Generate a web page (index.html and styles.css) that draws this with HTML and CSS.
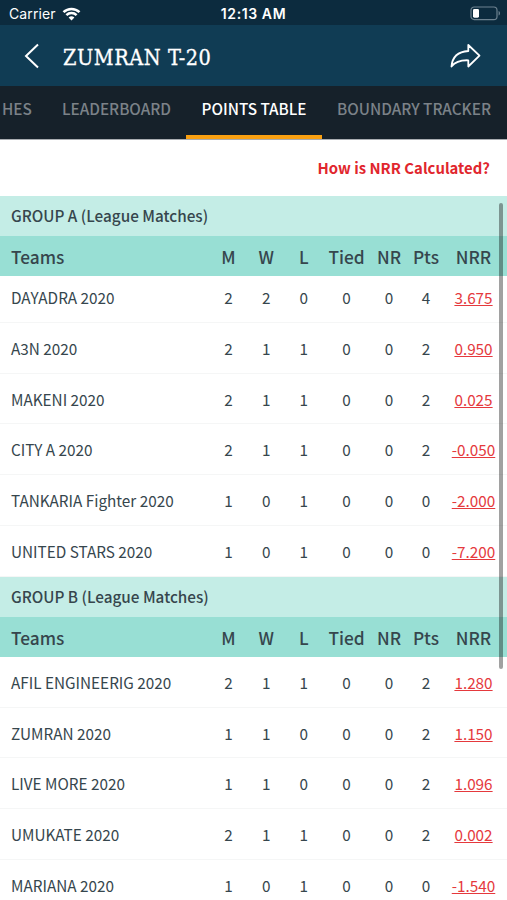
FILE: index.html
```html
<!DOCTYPE html>
<html lang="en">
<head>
    <meta charset="UTF-8">
    <meta name="viewport" content="width=device-width, initial-scale=1.0">
    <title>ZUMRAN T-20</title>
    <link rel="stylesheet" href="styles.css">
</head>
<body>
    <div class="status-bar">
        <div class="carrier">
            <span>Carrier</span>
            <svg class="wifi" width="19" height="14" viewBox="0 0 18 14" fill="none" stroke="#fff" stroke-width="2.5">
                <path d="M1 5.2a11.4 11.4 0 0 1 16 0"/>
                <path d="M3.9 8.2a7.2 7.2 0 0 1 10.2 0"/>
                <path d="M9 13.6l-2.9-3a4.1 4.1 0 0 1 5.8 0z" fill="#fff" stroke="none"/>
            </svg>
        </div>
        <span class="time">12:13 AM</span>
        <svg class="battery" width="31" height="15" viewBox="0 0 31 15">
            <rect x="1" y="1" width="26" height="12.6" rx="3.2" fill="none" stroke="#6d8290" stroke-width="1.2"/>
            <rect x="3" y="2.9" width="6" height="8.8" rx="1.4" fill="#fff"/>
            <path d="M28.6 5v4.6c1.9-.7 1.9-3.9 0-4.6z" fill="#6d8290"/>
        </svg>
    </div>
    <header class="header">
        <svg class="back" width="16" height="26" viewBox="0 0 16 26" fill="none" stroke="#fff" stroke-width="2">
            <path d="M14 1.5L2 13l12 11.500"/>
        </svg>
        <h1>ZUMRAN T-20</h1>
        <svg class="share" width="32" height="26" viewBox="0 0 32 26" fill="none" stroke="#fff" stroke-width="1.8" stroke-linejoin="round">
            <path d="M18.300 2L29.500 12.700 18.300 23.500V17.300C10.500 17 5 19 1.500 23.500 2.300 14 8.500 8.600 18.300 8z"/>
        </svg>
    </header>
    <nav class="tabs">
        <a class="tab tab-matches">HES</a>
        <a class="tab tab-leaderboard">LEADERBOARD</a>
        <a class="tab tab-points active">POINTS TABLE</a>
        <a class="tab tab-boundary">BOUNDARY TRACKER</a>
    </nav>
    <div class="nrr-link"><a>How is NRR Calculated?</a></div>
    <main class="tables">
        <section class="group group-a">
            <h2>GROUP A (League Matches)</h2>
            <div class="row head"><span>Teams</span><span>M</span><span>W</span><span>L</span><span>Tied</span><span>NR</span><span>Pts</span><span>NRR</span></div>
            <div class="row"><span>DAYADRA 2020</span><span>2</span><span>2</span><span>0</span><span>0</span><span>0</span><span>4</span><a>3.675</a></div>
            <div class="row"><span>A3N 2020</span><span>2</span><span>1</span><span>1</span><span>0</span><span>0</span><span>2</span><a>0.950</a></div>
            <div class="row"><span>MAKENI 2020</span><span>2</span><span>1</span><span>1</span><span>0</span><span>0</span><span>2</span><a>0.025</a></div>
            <div class="row"><span>CITY A 2020</span><span>2</span><span>1</span><span>1</span><span>0</span><span>0</span><span>2</span><a>-0.050</a></div>
            <div class="row"><span>TANKARIA Fighter 2020</span><span>1</span><span>0</span><span>1</span><span>0</span><span>0</span><span>0</span><a>-2.000</a></div>
            <div class="row"><span>UNITED STARS 2020</span><span>1</span><span>0</span><span>1</span><span>0</span><span>0</span><span>0</span><a>-7.200</a></div>
        </section>
        <section class="group">
            <h2>GROUP B (League Matches)</h2>
            <div class="row head"><span>Teams</span><span>M</span><span>W</span><span>L</span><span>Tied</span><span>NR</span><span>Pts</span><span>NRR</span></div>
            <div class="row"><span>AFIL ENGINEERIG 2020</span><span>2</span><span>1</span><span>1</span><span>0</span><span>0</span><span>2</span><a>1.280</a></div>
            <div class="row"><span>ZUMRAN 2020</span><span>1</span><span>1</span><span>0</span><span>0</span><span>0</span><span>2</span><a>1.150</a></div>
            <div class="row"><span>LIVE MORE 2020</span><span>1</span><span>1</span><span>0</span><span>0</span><span>0</span><span>2</span><a>1.096</a></div>
            <div class="row"><span>UMUKATE 2020</span><span>2</span><span>1</span><span>1</span><span>0</span><span>0</span><span>2</span><a>0.002</a></div>
            <div class="row"><span>MARIANA 2020</span><span>1</span><span>0</span><span>1</span><span>0</span><span>0</span><span>0</span><a>-1.540</a></div>
        </section>
        <div class="scrollbar"></div>
    </main>
</body>
</html>
```
FILE: styles.css
```css
* {
    box-sizing: border-box;
}
body {
    margin: 0;
    height: 900px;
    overflow: hidden;
    display: flex;
    flex-direction: column;
    background: #fff;
    color: #36464d;
    font-family: "Noto Sans CJK SC", "Open Sans", sans-serif;
}
.status-bar {
    flex: none;
    height: 25px;
    padding: 2px 6px 0 9px;
    display: grid;
    grid-template-columns: 1fr auto 1fr;
    align-items: center;
    background: #0c2b3e;
    color: #fff;
    font-family: Inter, sans-serif;
    font-size: 14px;
}
.carrier {
    display: flex;
    align-items: center;
    gap: 6px;
    letter-spacing: 0.1px;
}
.time {
    font-weight: 600;
    letter-spacing: 0.6px;
    margin-right: 3px;
}
.battery {
    justify-self: end;
}
.header {
    flex: none;
    height: 61px;
    padding: 0 25px 0 24px;
    display: flex;
    align-items: center;
    background: #103c54;
}
.header h1 {
    margin: 4px auto 0 23px;
    color: #fff;
    font-family: "DejaVu Serif Condensed", "DejaVu Serif", serif;
    font-size: 21.5px;
    font-weight: normal;
    letter-spacing: 0.55px;
    -webkit-text-stroke: 0.3px #fff;
    white-space: nowrap;
}
.tabs {
    flex: none;
    height: 54px;
    display: flex;
    background: #16212a;
    border-bottom: 1px solid #a9adb1;
    overflow: hidden;
}
.tab {
    flex: none;
    height: 54px;
    line-height: 44px;
    text-align: center;
    font-size: 15.3px;
    font-weight: 500;
    color: #7b8288;
    white-space: nowrap;
}
.tab-matches {
    width: 47px;
    padding-left: 2px;
    text-align: left;
}
.tab-leaderboard {
    width: 139px;
}
.tab-points {
    width: 136px;
}
.tab-boundary {
    width: 184px;
}
.tab.active {
    color: #fff;
    border-bottom: 5px solid #f9a010;
}
.nrr-link {
    flex: none;
    height: 56px;
    padding-right: 17px;
    line-height: 56px;
    text-align: right;
    color: #e1262d;
    font-size: 14.9px;
    font-weight: 700;
}
.tables {
    position: relative;
}
.group h2 {
    margin: 0;
    height: 40px;
    padding-left: 11px;
    line-height: 39px;
    background: #c4ede6;
    font-size: 15.3px;
    font-weight: 500;
}
.row {
    height: 50.8px;
    display: grid;
    grid-template-columns: 209.5px 38px 37.5px 37.5px 48px 37px 37px 58px;
    border-bottom: 1px solid #f5f6f6;
    line-height: 50px;
    font-size: 15.3px;
    text-align: center;
    white-space: nowrap;
}
.row span:first-child {
    padding-left: 11px;
    text-align: left;
}
.row a {
    color: #e5393d;
    text-decoration: underline;
}
.row.head {
    position: relative;
    z-index: 1;
    height: 40px;
    border: none;
    background: #98dfd4;
    line-height: 42px;
    font-size: 17.3px;
    font-weight: 500;
}
/* first row is scrolled slightly under the header */
.group-a .head + .row {
    margin-top: -4px;
}
.scrollbar {
    position: absolute;
    z-index: 2;
    top: 7px;
    right: 4px;
    width: 4px;
    height: 466px;
    border-radius: 2px;
    background: rgba(0, 0, 0, 0.37);
}
```
